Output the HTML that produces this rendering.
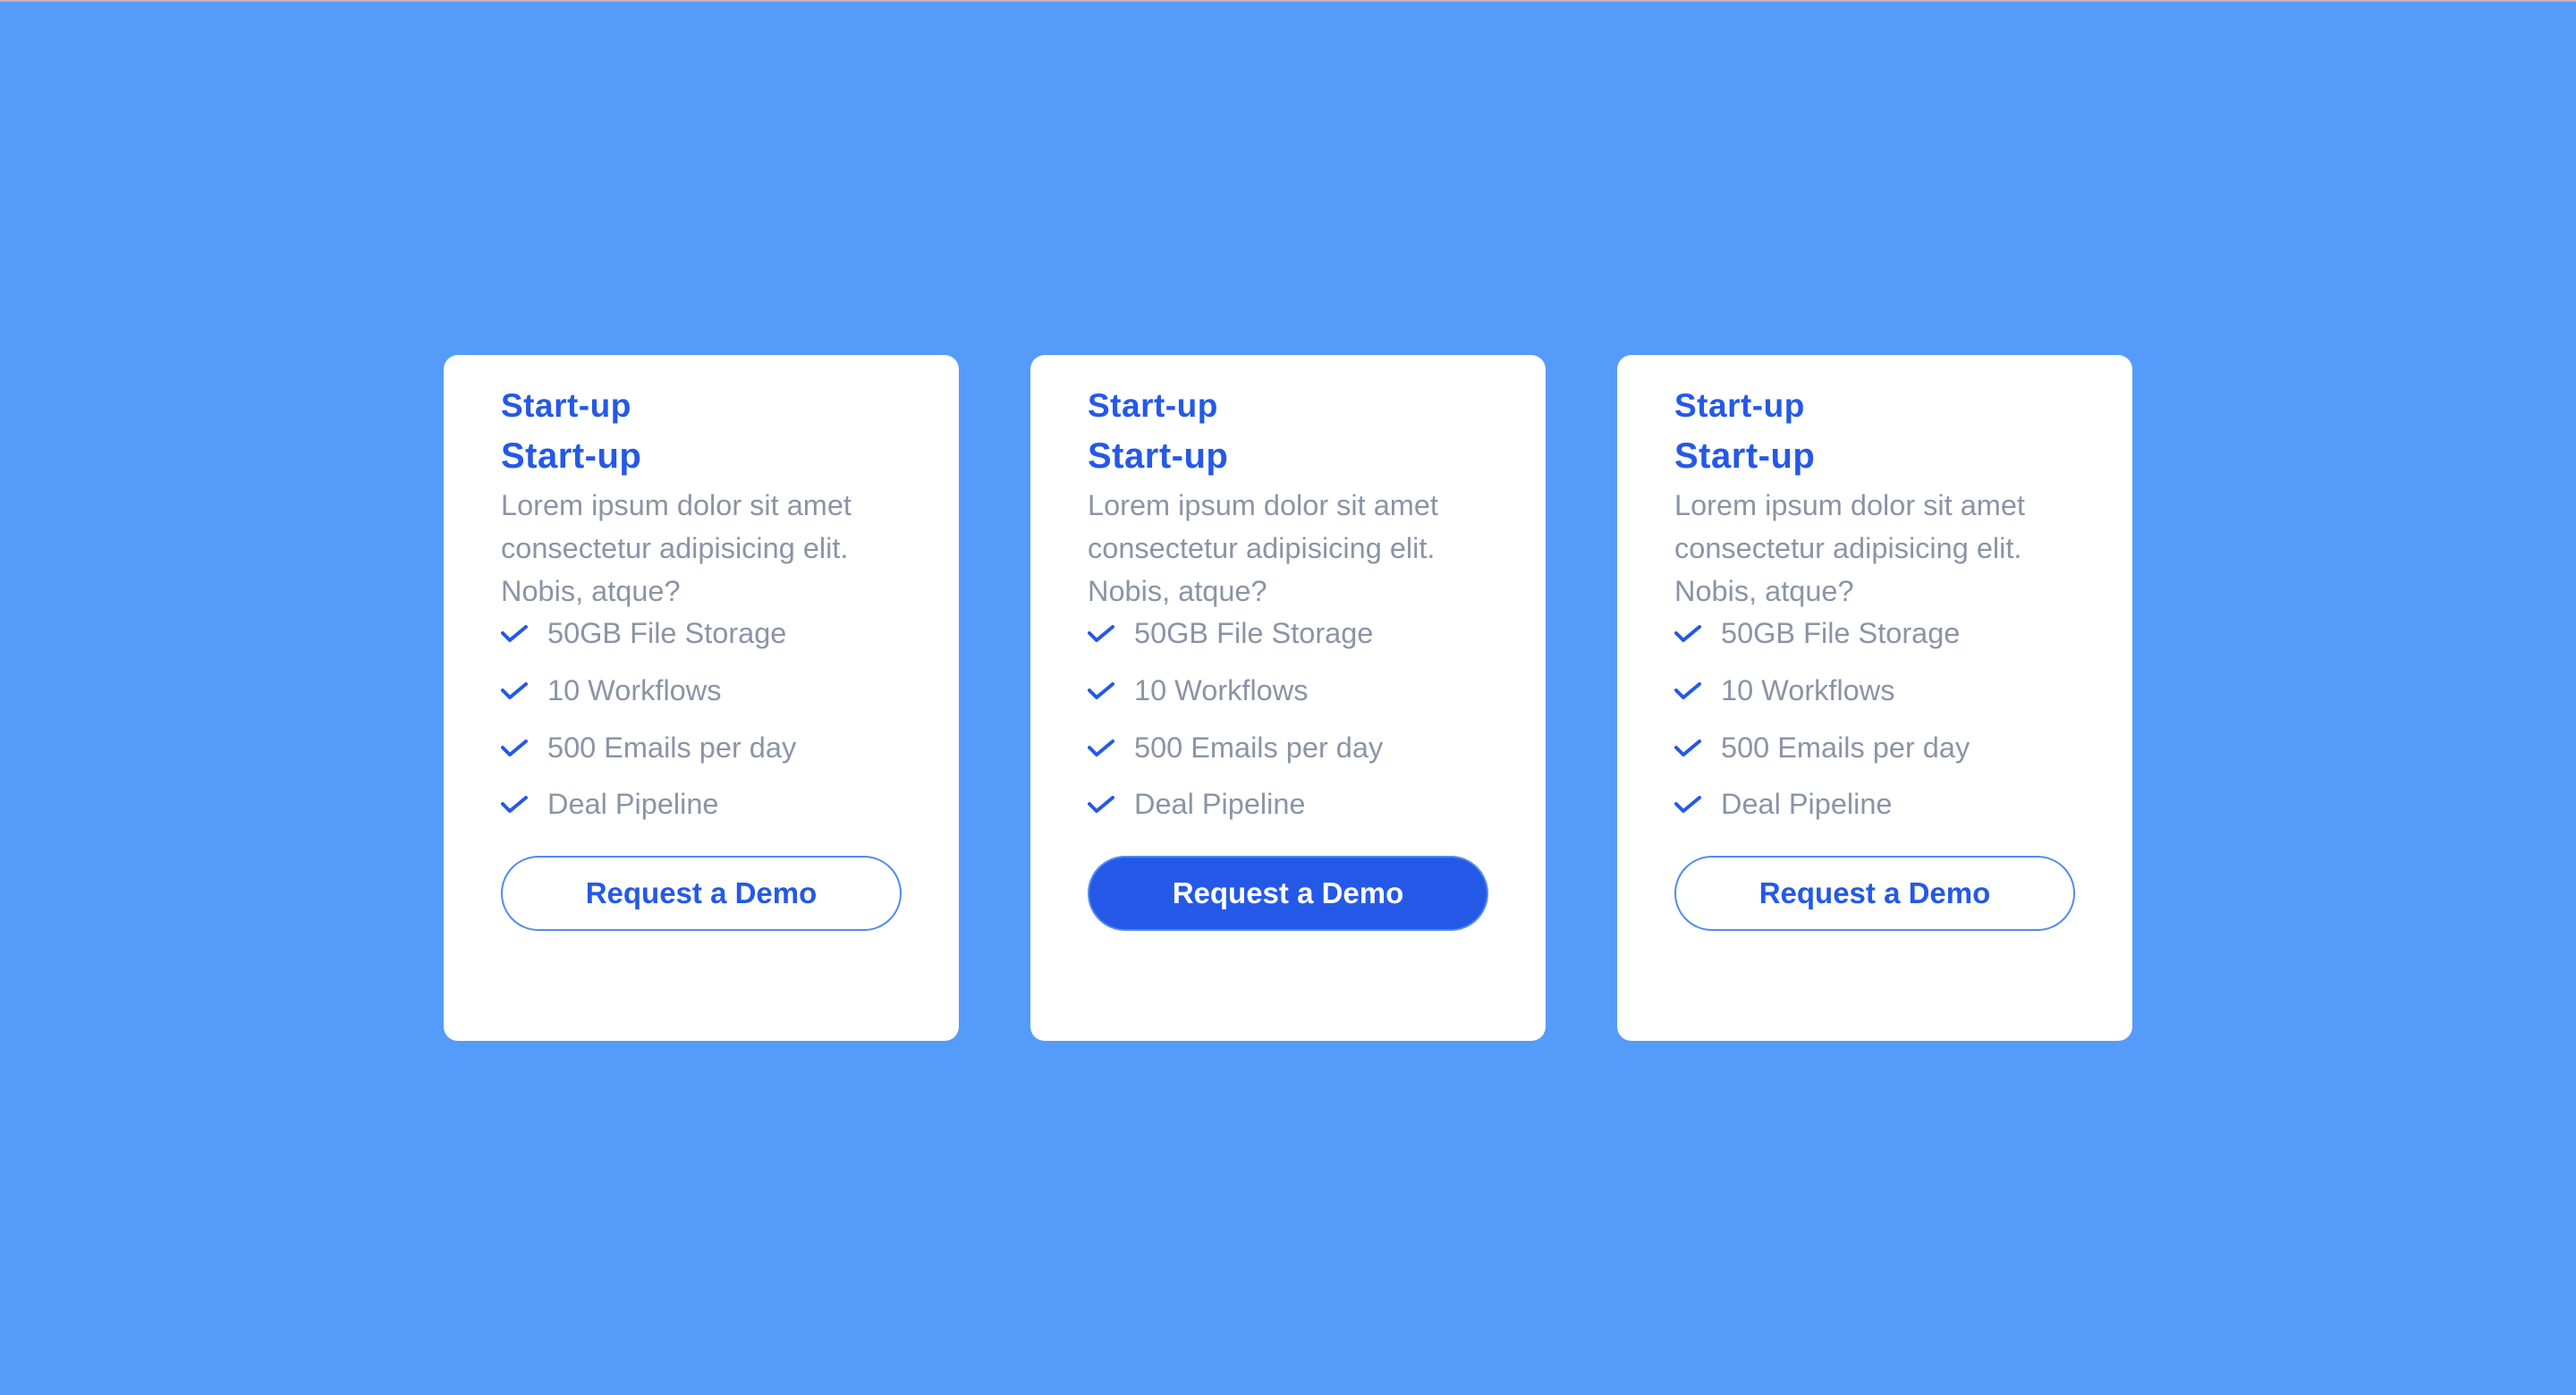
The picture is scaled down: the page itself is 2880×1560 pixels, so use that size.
<!DOCTYPE html>
<html><head><meta charset="utf-8"><style>
*{margin:0;padding:0;box-sizing:border-box}
html,body{width:2880px;height:1560px;overflow:hidden}
body{background:#559bf9;font-family:"Liberation Sans",sans-serif;position:relative}
.topline{position:absolute;left:0;top:0;width:2880px;height:2px;background:#c9aebe}
.card{position:absolute;top:397px;width:576px;height:767px;background:#fff;border-radius:16px}
.t{position:absolute;left:64px;color:#2459e8;font-weight:700;white-space:nowrap;letter-spacing:0.5px}
.p{position:absolute;left:64px;color:#8a94a6;font-size:32.5px;line-height:48px;white-space:nowrap}
.li{position:absolute;left:64px;color:#8a94a6;font-size:32.5px;white-space:nowrap;height:40px;line-height:40px}
.li svg{position:absolute;left:0;top:11px}
.li span{position:absolute;left:52px;top:0}
.btn{position:absolute;left:64px;top:560px;width:448px;height:84px;border-radius:42px;border:2px solid #4f8cf0;color:#2459e8;font-weight:700;font-size:33px;display:flex;align-items:center;justify-content:center}
.btn.f{background:#2459e8;color:#fff;border-color:#4f8cf0}
</style></head><body>
<div class="topline"></div>
<div class="card" style="left:496px">
<div class="t" style="top:36px;font-size:37px">Start-up</div>
<div class="t" style="top:91px;font-size:40px">Start-up</div>
<div class="p" style="top:144px">Lorem ipsum dolor sit amet<br>consectetur adipisicing elit.<br>Nobis, atque?</div>
<div class="li" style="top:291px"><svg width="30" height="20" viewBox="0 0 30 20"><path d="M2 9l8 8L28 2" fill="none" stroke="#2459e8" stroke-width="4" stroke-linecap="round" stroke-linejoin="round"/></svg><span>50GB File Storage</span></div>
<div class="li" style="top:355px"><svg width="30" height="20" viewBox="0 0 30 20"><path d="M2 9l8 8L28 2" fill="none" stroke="#2459e8" stroke-width="4" stroke-linecap="round" stroke-linejoin="round"/></svg><span>10 Workflows</span></div>
<div class="li" style="top:419px"><svg width="30" height="20" viewBox="0 0 30 20"><path d="M2 9l8 8L28 2" fill="none" stroke="#2459e8" stroke-width="4" stroke-linecap="round" stroke-linejoin="round"/></svg><span>500 Emails per day</span></div>
<div class="li" style="top:482px"><svg width="30" height="20" viewBox="0 0 30 20"><path d="M2 9l8 8L28 2" fill="none" stroke="#2459e8" stroke-width="4" stroke-linecap="round" stroke-linejoin="round"/></svg><span>Deal Pipeline</span></div>
<div class="btn">Request a Demo</div>
</div>
<div class="card" style="left:1152px">
<div class="t" style="top:36px;font-size:37px">Start-up</div>
<div class="t" style="top:91px;font-size:40px">Start-up</div>
<div class="p" style="top:144px">Lorem ipsum dolor sit amet<br>consectetur adipisicing elit.<br>Nobis, atque?</div>
<div class="li" style="top:291px"><svg width="30" height="20" viewBox="0 0 30 20"><path d="M2 9l8 8L28 2" fill="none" stroke="#2459e8" stroke-width="4" stroke-linecap="round" stroke-linejoin="round"/></svg><span>50GB File Storage</span></div>
<div class="li" style="top:355px"><svg width="30" height="20" viewBox="0 0 30 20"><path d="M2 9l8 8L28 2" fill="none" stroke="#2459e8" stroke-width="4" stroke-linecap="round" stroke-linejoin="round"/></svg><span>10 Workflows</span></div>
<div class="li" style="top:419px"><svg width="30" height="20" viewBox="0 0 30 20"><path d="M2 9l8 8L28 2" fill="none" stroke="#2459e8" stroke-width="4" stroke-linecap="round" stroke-linejoin="round"/></svg><span>500 Emails per day</span></div>
<div class="li" style="top:482px"><svg width="30" height="20" viewBox="0 0 30 20"><path d="M2 9l8 8L28 2" fill="none" stroke="#2459e8" stroke-width="4" stroke-linecap="round" stroke-linejoin="round"/></svg><span>Deal Pipeline</span></div>
<div class="btn f">Request a Demo</div>
</div>
<div class="card" style="left:1808px">
<div class="t" style="top:36px;font-size:37px">Start-up</div>
<div class="t" style="top:91px;font-size:40px">Start-up</div>
<div class="p" style="top:144px">Lorem ipsum dolor sit amet<br>consectetur adipisicing elit.<br>Nobis, atque?</div>
<div class="li" style="top:291px"><svg width="30" height="20" viewBox="0 0 30 20"><path d="M2 9l8 8L28 2" fill="none" stroke="#2459e8" stroke-width="4" stroke-linecap="round" stroke-linejoin="round"/></svg><span>50GB File Storage</span></div>
<div class="li" style="top:355px"><svg width="30" height="20" viewBox="0 0 30 20"><path d="M2 9l8 8L28 2" fill="none" stroke="#2459e8" stroke-width="4" stroke-linecap="round" stroke-linejoin="round"/></svg><span>10 Workflows</span></div>
<div class="li" style="top:419px"><svg width="30" height="20" viewBox="0 0 30 20"><path d="M2 9l8 8L28 2" fill="none" stroke="#2459e8" stroke-width="4" stroke-linecap="round" stroke-linejoin="round"/></svg><span>500 Emails per day</span></div>
<div class="li" style="top:482px"><svg width="30" height="20" viewBox="0 0 30 20"><path d="M2 9l8 8L28 2" fill="none" stroke="#2459e8" stroke-width="4" stroke-linecap="round" stroke-linejoin="round"/></svg><span>Deal Pipeline</span></div>
<div class="btn">Request a Demo</div>
</div>
</body></html>
